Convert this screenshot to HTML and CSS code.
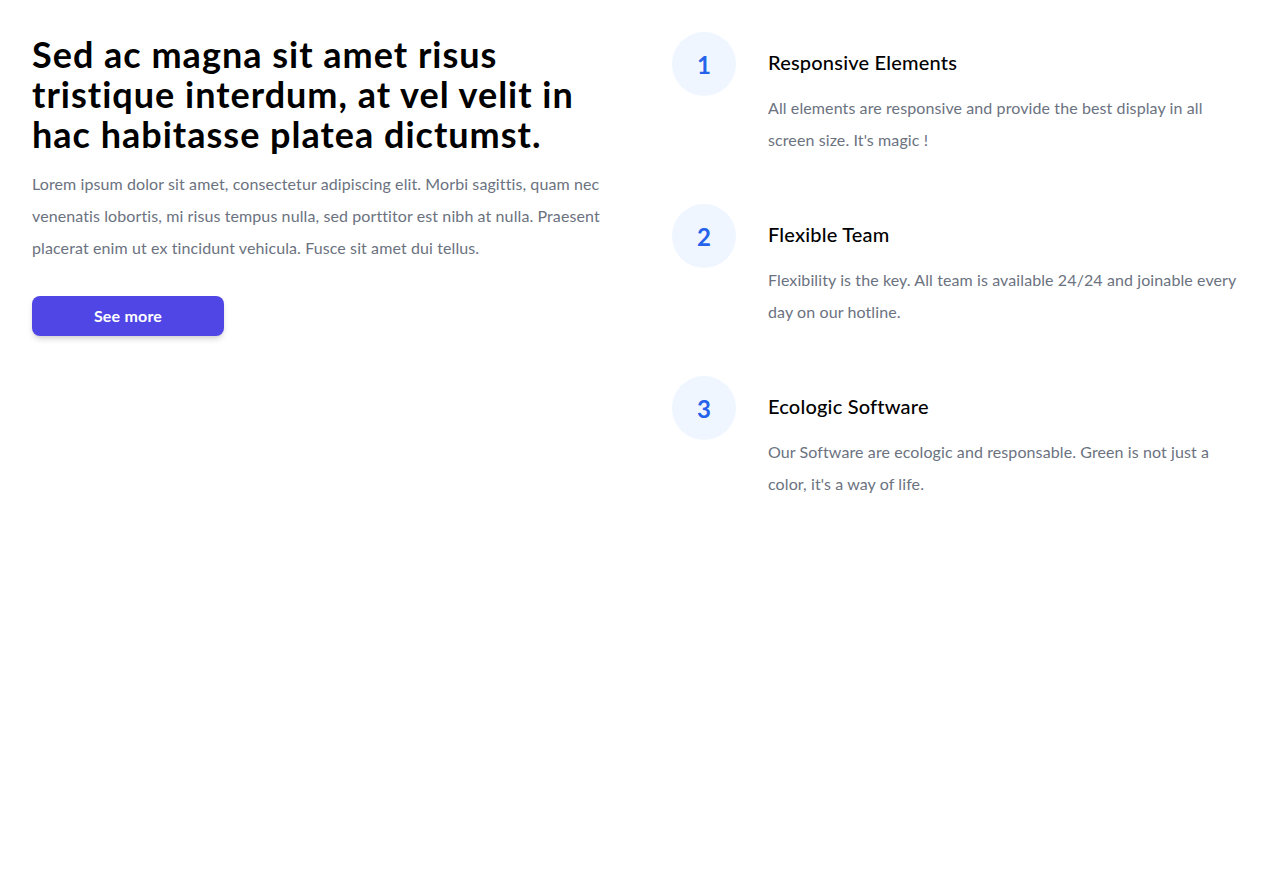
FILE: index.html
```html
<!DOCTYPE html>
<html lang="en">
<head>
<meta charset="utf-8">
<title>Features</title>
<link rel="stylesheet" href="styles.css">
</head>
<body>
<section class="section">
  <div class="intro">
    <h1 class="intro-title">Sed ac magna sit amet risus tristique interdum, at vel velit in hac habitasse platea dictumst.</h1>
    <p class="intro-text">Lorem ipsum dolor sit amet, consectetur adipiscing elit. Morbi sagittis, quam nec venenatis lobortis, mi risus tempus nulla, sed porttitor est nibh at nulla. Praesent placerat enim ut ex tincidunt vehicula. Fusce sit amet dui tellus.</p>
    <button class="btn" type="button">See more</button>
  </div>
  <ul class="features">
    <li class="feature">
      <div class="feature-num">1</div>
      <div class="feature-body">
        <h3 class="feature-title">Responsive Elements</h3>
        <p class="feature-text">All elements are responsive and provide the best display in all screen size. It's magic !</p>
      </div>
    </li>
    <li class="feature">
      <div class="feature-num">2</div>
      <div class="feature-body">
        <h3 class="feature-title">Flexible Team</h3>
        <p class="feature-text">Flexibility is the key. All team is available 24/24 and joinable every day on our hotline.</p>
      </div>
    </li>
    <li class="feature">
      <div class="feature-num">3</div>
      <div class="feature-body">
        <h3 class="feature-title">Ecologic Software</h3>
        <p class="feature-text">Our Software are ecologic and responsable. Green is not just a color, it's a way of life.</p>
      </div>
    </li>
  </ul>
</section>
</body>
</html>
```
FILE: styles.css
```css
* { box-sizing: border-box; }
html, body { margin: 0; padding: 0; background: #fff; }
body {
  font-family: "Lato", "Open Sans", "Liberation Sans", sans-serif;
  color: #000;
}
.section {
  display: grid;
  grid-template-columns: 576px 576px;
  column-gap: 64px;
  padding: 32px;
  align-items: start;
}
.intro-title {
  margin: 0;
  padding-top: 2px;
  font-size: 36px;
  line-height: 40px;
  font-weight: 700;
  letter-spacing: 1px;
  color: #000;
}
.intro-text {
  margin: 14px 0 0;
  font-size: 16px;
  line-height: 32px;
  letter-spacing: 0.1px;
  color: #6b7280;
}
.btn {
  margin-top: 32px;
  width: 192px;
  height: 40px;
  padding: 0 0 2px;
  border: 0;
  border-radius: 8px;
  background: #4f46e5;
  color: #fff;
  font-family: inherit;
  font-size: 16px;
  font-weight: 700;
  letter-spacing: 0.2px;
  box-shadow: 0 4px 6px -1px rgba(0,0,0,0.15), 0 2px 4px -2px rgba(0,0,0,0.1);
  cursor: pointer;
}
.features {
  list-style: none;
  margin: 0;
  padding: 0;
  display: flex;
  flex-direction: column;
  gap: 48px;
}
.feature {
  display: flex;
  gap: 32px;
}
.feature-num {
  flex: none;
  width: 64px;
  height: 64px;
  border-radius: 50%;
  background: #eff6ff;
  color: #2563eb;
  font-size: 24px;
  font-weight: 700;
  display: flex;
  align-items: center;
  justify-content: center;
}
.feature-body { padding-top: 16px; }
.feature-title {
  margin: 0;
  font-size: 20px;
  line-height: 28px;
  font-weight: 500;
  letter-spacing: 0.2px;
  color: #000;
}
.feature-text {
  margin: 16px 0 0;
  font-size: 16px;
  line-height: 32px;
  letter-spacing: 0.1px;
  color: #6b7280;
}
```
